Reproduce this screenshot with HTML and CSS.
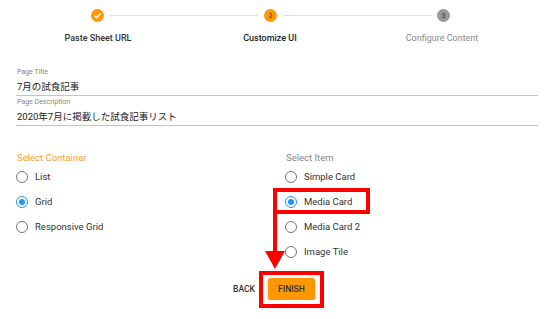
FILE: index.html
```html
<!DOCTYPE html>
<html lang="ja">
<head>
    <meta charset="UTF-8">
    <meta name="viewport" content="width=device-width, initial-scale=1.0">
    <title>Customize UI</title>
    <link rel="stylesheet" href="styles.css">
</head>
<body>
    <div class="stepper">
        <div class="step-dots">
            <span class="dot done">
                <svg width="9" height="9" viewBox="0 0 10 10"><path d="M1.5 5.2 L4 7.6 L8.6 2.6" fill="none" stroke="#fff" stroke-width="1.6"/></svg>
            </span>
            <span class="step-line"></span>
            <span class="dot active">2</span>
            <span class="step-line"></span>
            <span class="dot todo">3</span>
        </div>
        <div class="step-labels">
            <div class="step-label">Paste Sheet URL</div>
            <div class="step-label current">Customize UI</div>
            <div class="step-label muted">Configure Content</div>
        </div>
    </div>

    <div class="fields">
        <div class="field">
            <label>Page Title</label>
            <div class="value">7月の試食記事</div>
        </div>
        <div class="field">
            <label>Page Description</label>
            <div class="value">2020年7月に掲載した試食記事リスト</div>
        </div>
    </div>

    <div class="options">
        <div class="group">
            <h4 class="orange">Select Container</h4>
            <div class="radio"><span class="circle"></span>List</div>
            <div class="radio"><span class="circle checked"></span>Grid</div>
            <div class="radio"><span class="circle"></span>Responsive Grid</div>
        </div>
        <div class="group">
            <h4>Select Item</h4>
            <div class="radio"><span class="circle"></span>Simple Card</div>
            <div class="radio"><span class="circle checked"></span>Media Card</div>
            <div class="radio"><span class="circle"></span>Media Card 2</div>
            <div class="radio"><span class="circle"></span>Image Tile</div>
        </div>
    </div>

    <div class="actions">
        <button class="back">BACK</button>
        <button class="finish">FINISH</button>
    </div>

    <!-- red annotation marks -->
    <div class="mark mark-item"></div>
    <div class="mark-shaft"></div>
    <div class="mark-head"></div>
    <div class="mark mark-finish"></div>
</body>
</html>
```

FILE: styles.css
```css
body {
    margin: 0;
    padding: 0;
    background-color: #fff;
    font-family: Roboto, "Noto Sans CJK JP", sans-serif;
    color: #222;
}

.stepper {
    padding-top: 9px;
}

.step-dots {
    display: flex;
    align-items: center;
    padding-left: 91px;
}

.dot {
    width: 13px;
    height: 13px;
    border-radius: 50%;
    display: flex;
    align-items: center;
    justify-content: center;
    font-size: 7px;
    color: #333;
}

.dot.done,
.dot.active {
    background-color: #ff9800;
}

.dot.todo {
    background-color: #999;
    color: #333;
}

.step-line {
    width: 148px;
    height: 1px;
    background-color: #e0e0e0;
    margin: 0 6px;
}

.step-labels {
    display: grid;
    grid-template-columns: 172px 172px 172px;
    padding-left: 12px;
    margin-top: 10px;
}

.step-label {
    text-align: center;
    font-size: 9px;
    line-height: 12px;
    font-weight: 500;
    color: #333;
}

.step-label.current {
    color: #222;
}

.step-label.muted {
    font-weight: 400;
    color: #8a8a8a;
}

.fields {
    margin: 24px 22px 0 16px;
}

.field {
    border-bottom: 1px solid #c4c4c4;
    margin-bottom: 2px;
}

.field label {
    display: block;
    font-size: 7px;
    line-height: 9px;
    color: #888;
    padding-left: 1px;
}

.field .value {
    font-size: 9.5px;
    line-height: 14px;
    padding: 3px 0 1px 1px;
}

.options {
    display: grid;
    grid-template-columns: 269px 1fr;
    padding-left: 16px;
    margin-top: 26px;
}

.group h4 {
    margin: 0;
    font-size: 9.5px;
    line-height: 12px;
    font-weight: 400;
    color: #888;
    padding-left: 1px;
}

.group h4.orange {
    color: #ffa030;
}

.radio {
    display: flex;
    align-items: center;
    height: 25px;
    font-size: 9.5px;
    color: #333;
}

.circle {
    width: 12px;
    height: 12px;
    box-sizing: border-box;
    border: 1.5px solid #757575;
    border-radius: 50%;
    margin-right: 7px;
    display: flex;
    align-items: center;
    justify-content: center;
}

.circle.checked {
    border-color: #2196f3;
}

.circle.checked::after {
    content: "";
    width: 6px;
    height: 6px;
    border-radius: 50%;
    background-color: #2196f3;
}

.actions {
    display: flex;
    justify-content: center;
    align-items: center;
    padding-right: 12px;
    margin-top: 14px;
    gap: 13px;
}

.actions button {
    font-family: Roboto, sans-serif;
    font-size: 8.5px;
    font-weight: 500;
    color: #333;
    border: none;
    background: none;
    padding: 0;
}

.actions .finish {
    width: 47px;
    height: 22px;
    background-color: #ff9800;
    border-radius: 3px;
    box-shadow: 0 1px 3px rgba(0,0,0,0.3);
}

.mark {
    position: absolute;
    border: 4px solid #f00;
    box-sizing: border-box;
}

.mark-item {
    left: 273px;
    top: 188px;
    width: 97px;
    height: 26px;
}

.mark-finish {
    left: 259px;
    top: 271px;
    width: 65px;
    height: 37px;
}

.mark-shaft {
    position: absolute;
    left: 273px;
    top: 213px;
    width: 4px;
    height: 40px;
    background-color: #f00;
}

.mark-head {
    position: absolute;
    left: 265px;
    top: 251px;
    width: 0;
    height: 0;
    border-left: 10px solid transparent;
    border-right: 10px solid transparent;
    border-top: 18px solid #f00;
}
```
